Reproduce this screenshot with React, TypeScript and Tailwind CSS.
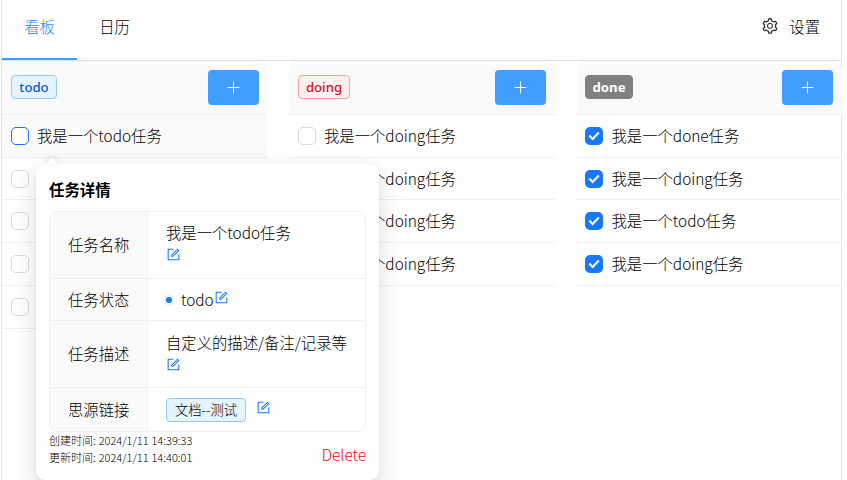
import React from "react";
import { AiOutlineForm, AiOutlineSetting } from "react-icons/ai";

type Task = { title: string; height: string };
type Column = {
  name: string;
  tag: string;
  active?: boolean;
  done?: boolean;
  width: string;
  inset: string;
  tasks: Task[];
};

const ROWS = ["h-[43px]", "h-[42px]", "h-[43px]", "h-[43px]", "h-[43px]"];
const rows = (titles: string[]): Task[] => titles.map((title, i) => ({ title, height: ROWS[i] }));

const columns: Column[] = [
  {
    name: "todo",
    tag: "border-[#91caff] bg-[#e6f4ff] text-[#0958d9] font-medium w-[46px]",
    active: true,
    width: "w-[265px] mr-[22px]",
    inset: "pl-[9px] pr-[8px]",
    tasks: rows(["我是一个todo任务", "", "", "", ""]),
  },
  {
    name: "doing",
    tag: "border-[#ffa39e] bg-[#fff1f0] text-[#cf1322] font-medium w-[52px]",
    width: "w-[266px] mr-[22px]",
    inset: "pl-[9px] pr-[9px]",
    tasks: rows(["我是一个doing任务", "我是一个doing任务", "我是一个doing任务", "我是一个doing任务"]),
  },
  {
    name: "done",
    tag: "border-[#808080] bg-[#808080] text-white font-bold w-[48px]",
    done: true,
    width: "w-[265px]",
    inset: "pl-[8px] pr-[9px]",
    tasks: rows(["我是一个done任务", "我是一个doing任务", "我是一个todo任务", "我是一个doing任务"]),
  },
];

function Checkbox({ checked, hot }: { checked?: boolean; hot?: boolean }) {
  if (checked) {
    return (
      <span className="flex h-[18px] w-[18px] shrink-0 items-center justify-center rounded-[5px] bg-[#1677ff]">
        <svg width="12" height="10" viewBox="0 0 12 10" fill="none" stroke="#fff" strokeWidth="2.1">
          <path d="M1.3 4.6 L4.6 7.9 L10.8 1.6" />
        </svg>
      </span>
    );
  }
  return (
    <span
      className={`h-[18px] w-[18px] shrink-0 rounded-[5px] border bg-white ${hot ? "border-[#1677ff]" : "border-[#d9d9d9]"}`}
    />
  );
}

function BoardColumn({ col }: { col: Column }) {
  return (
    <section className={`shrink-0 ${col.width}`}>
      <header
        className={`flex h-[54px] items-start justify-between rounded-t-[9px] border-b border-[#f0f0f0] bg-[#fafafa] pt-[9px] ${col.inset}`}
      >
        <span
          className={`mt-[5px] flex h-[24px] items-center justify-center rounded-[4px] border font-['Noto_Sans',sans-serif] text-[13.2px] leading-[22px] ${col.tag}`}
        >
          {col.name}
        </span>
        <button className="flex h-[35px] w-[51px] items-center justify-center rounded-[4px] bg-[#409eff]">
          <svg width="13" height="13" viewBox="0 0 13 13" stroke="#fff" strokeWidth="1">
            <path d="M0.5 6.5H12.5M6.5 0.5V12.5" />
          </svg>
        </button>
      </header>
      <ul>
        {col.tasks.map((t, i) => {
          const hot = col.active && i === 0;
          return (
            <li
              key={i}
              className={`flex items-center border-b border-[#f0f0f0] ${col.done ? "pl-[8px]" : "pl-[8.5px]"} ${t.height} ${hot ? "bg-[#fafafa]" : ""}`}
            >
              <Checkbox checked={col.done} hot={hot} />
              <span className="ml-[8.5px] pb-[2px] whitespace-nowrap">{t.title}</span>
            </li>
          );
        })}
      </ul>
    </section>
  );
}

function EditIcon({ className }: { className?: string }) {
  return <AiOutlineForm size={15} className={`shrink-0 text-[#1677ff] ${className ?? ""}`} />;
}

function DetailRow({
  label,
  height,
  last,
  children,
}: {
  label: string;
  height: string;
  last?: boolean;
  children: React.ReactNode;
}) {
  return (
    <div className={`flex ${height} ${last ? "" : "border-b border-[#f0f0f0]"}`}>
      <div className="flex w-[98px] shrink-0 items-center border-r border-[#f0f0f0] bg-[#fafafa] pb-[2px] pl-[18px]">{label}</div>
      <div className="min-w-0 flex-1 pl-[18px] whitespace-nowrap">{children}</div>
    </div>
  );
}

function DetailPopover() {
  return (
    <div className="absolute top-[164px] left-[36px] h-[316px] w-[343px] rounded-[9px] bg-white pt-[13px] pr-[13px] pl-[13px] shadow-[0_6px_16px_0_rgba(0,0,0,0.08),0_3px_6px_-4px_rgba(0,0,0,0.12),0_9px_28px_8px_rgba(0,0,0,0.05)]">
      <svg className="absolute top-[-7px] left-[7px] drop-shadow-[0_-1px_3px_rgba(0,0,0,0.16)]" width="18" height="7" viewBox="0 0 18 7" fill="#fff">
        <path d="M0 8 C2 8 3 7 4 6 L7.7 1.8 Q9 0.4 10.3 1.8 L14 6 C15 7 16 8 18 8 Z" />
      </svg>
      <h3 className="h-[34px] text-[15.4px] leading-[24px] font-bold">任务详情</h3>
      <div className="h-[221px] overflow-hidden rounded-[9px] border border-[#f0f0f0]">
        <DetailRow label="任务名称" height="h-[67px]">
          <div className="pt-[8px] leading-[24px]">我是一个todo任务</div>
          <EditIcon className="mt-[3px]" />
        </DetailRow>
        <DetailRow label="任务状态" height="h-[42px]">
          <div className="flex h-[42px] items-center">
            <span className="h-[6px] w-[6px] rounded-full bg-[#1677ff] shadow-[0_0_0_3px_#edf5ff]" />
            <span className="ml-[9px] pb-[2px]">todo</span>
            <EditIcon className="mb-[6px]" />
          </div>
        </DetailRow>
        <DetailRow label="任务描述" height="h-[67px]">
          <div className="pt-[9px] leading-[24px]">自定义的描述/备注/记录等</div>
          <EditIcon className="mt-[3px]" />
        </DetailRow>
        <DetailRow label="思源链接" height="h-[43px]" last>
          <div className="flex h-[43px] items-center">
            <span className="flex h-[24px] w-[80px] items-center justify-center rounded-[4px] border border-[#91caff] bg-[#e6f4ff] text-[13.3px]">
              文档--测试
            </span>
            <EditIcon className="mb-[5px] ml-[10px]" />
          </div>
        </DetailRow>
      </div>
      <footer className="flex justify-between">
        <div className="text-[11px] leading-[17px] [word-spacing:0.5px]">
          <p>创建时间: 2024/1/11 14:39:33</p>
          <p>更新时间: 2024/1/11 14:40:01</p>
        </div>
        <button className="mt-[10px] h-[24px] leading-[24px] text-[#ff0000]">Delete</button>
      </footer>
    </div>
  );
}

export default function App() {
  return (
    <div className="relative h-[480px] w-[847px] overflow-hidden bg-white font-['Noto_Sans_CJK_SC','Noto_Sans',sans-serif] text-[15.35px] leading-[24px] font-light text-black">
      <div className="ml-px h-[480px] w-[841px] border-x border-[#e4e4e8]">
        <nav className="flex h-[61px] border-b border-[#dcdfe6]">
          <div className="flex h-[60px] w-[75px] items-center justify-center border-b-2 border-[#409eff] pb-[7px] text-[#1f8cff]">
            看板
          </div>
          <div className="flex h-[60px] w-[75px] items-center justify-center pb-[9px]">日历</div>
          <div className="ml-auto flex h-[60px] items-center pr-[21px] pb-[9px]">
            <AiOutlineSetting size={18} className="mt-px text-[#303133]" />
            <span className="ml-[10px]">设置</span>
          </div>
        </nav>
        <main className="flex">
          {columns.map((c) => (
            <BoardColumn key={c.name} col={c} />
          ))}
        </main>
      </div>
      <DetailPopover />
    </div>
  );
}
